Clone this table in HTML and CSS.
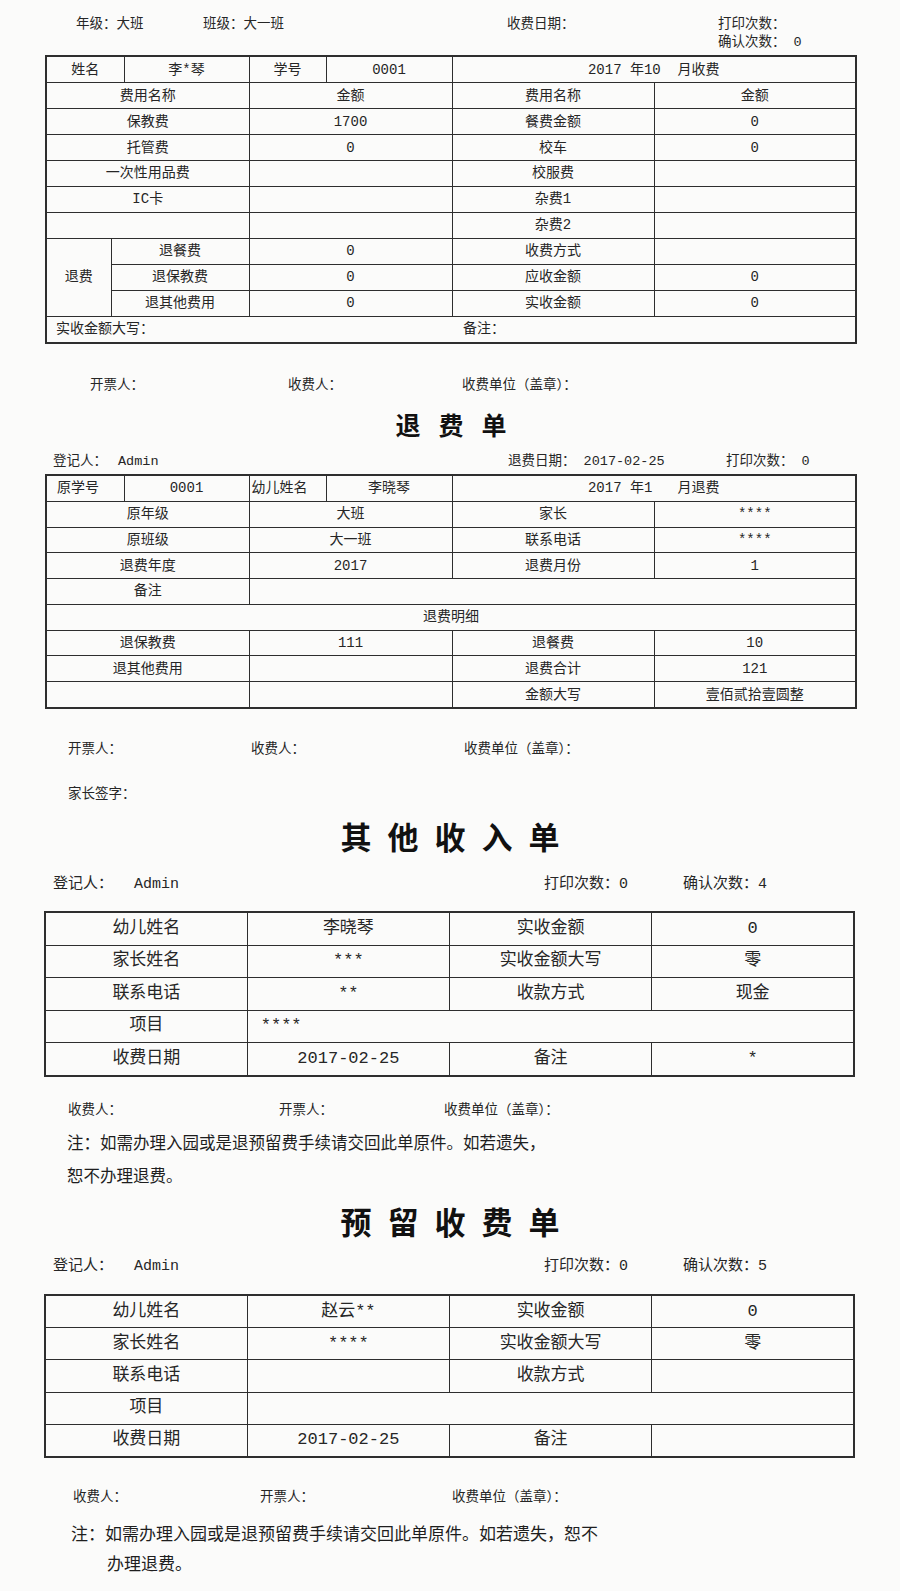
FILE: index.html
```html
<!DOCTYPE html>
<html lang="zh-CN">
<head>
<meta charset="utf-8">
<title>收费单</title>
<link rel="stylesheet" href="styles.css">
</head>
<body>
<div class="page">
  <div class="hdr1">
    <span class="h-a">年级：大班</span>
    <span class="h-b">班级：大一班</span>
    <span class="h-c">收费日期：</span>
    <span>打印次数：</span>
  </div>
  <div class="hdr2">确认次数：&nbsp;0</div>

  <table class="t t1">
    <colgroup><col class="c65"><col class="c13"><col class="c125"><col class="c77"><col class="c126"><col class="c202"><col class="c202"></colgroup>
    <tr><td colspan="2">姓名</td><td>李*琴</td><td>学号</td><td>0001</td><td colspan="2">2017 年10&nbsp;&nbsp;月收费</td></tr>
    <tr><td colspan="3">费用名称</td><td colspan="2">金额</td><td>费用名称</td><td>金额</td></tr>
    <tr><td colspan="3">保教费</td><td colspan="2">1700</td><td>餐费金额</td><td>0</td></tr>
    <tr><td colspan="3">托管费</td><td colspan="2">0</td><td>校车</td><td>0</td></tr>
    <tr><td colspan="3">一次性用品费</td><td colspan="2"></td><td>校服费</td><td></td></tr>
    <tr><td colspan="3">IC卡</td><td colspan="2"></td><td>杂费1</td><td></td></tr>
    <tr><td colspan="3"></td><td colspan="2"></td><td>杂费2</td><td></td></tr>
    <tr><td rowspan="3">退费</td><td colspan="2">退餐费</td><td colspan="2">0</td><td>收费方式</td><td></td></tr>
    <tr><td colspan="2">退保教费</td><td colspan="2">0</td><td>应收金额</td><td>0</td></tr>
    <tr><td colspan="2">退其他费用</td><td colspan="2">0</td><td>实收金额</td><td>0</td></tr>
    <tr><td colspan="5" class="lft p9">实收金额大写：</td><td colspan="2" class="lft p11 nosep">备注：</td></tr>
  </table>

  <div class="sign s1"><span class="w198">开票人：</span><span class="w174">收费人：</span><span>收费单位（盖章）：</span></div>

  <h1 class="title small">退费单</h1>

  <div class="meta m2"><span class="w455">登记人：<span class="admin-s">Admin</span></span><span class="w218">退费日期：&nbsp;2017-02-25</span><span>打印次数：&nbsp;0</span></div>

  <table class="t t2">
    <colgroup><col class="c78"><col class="c125"><col class="c77"><col class="c126"><col class="c202"><col class="c202"></colgroup>
    <tr><td class="lft p10">原学号</td><td>0001</td><td class="lft p2">幼儿姓名</td><td>李晓琴</td><td colspan="2">2017 年1&nbsp;&nbsp;&nbsp;月退费</td></tr>
    <tr><td colspan="2">原年级</td><td colspan="2">大班</td><td>家长</td><td>****</td></tr>
    <tr><td colspan="2">原班级</td><td colspan="2">大一班</td><td>联系电话</td><td>****</td></tr>
    <tr><td colspan="2">退费年度</td><td colspan="2">2017</td><td>退费月份</td><td>1</td></tr>
    <tr><td colspan="2">备注</td><td colspan="4"></td></tr>
    <tr><td colspan="6">退费明细</td></tr>
    <tr><td colspan="2">退保教费</td><td colspan="2">111</td><td>退餐费</td><td>10</td></tr>
    <tr><td colspan="2">退其他费用</td><td colspan="2"></td><td>退费合计</td><td>121</td></tr>
    <tr><td colspan="2"></td><td colspan="2"></td><td>金额大写</td><td>壹佰贰拾壹圆整</td></tr>
  </table>

  <div class="sign s2"><span class="w183">开票人：</span><span class="w213">收费人：</span><span>收费单位（盖章）：</span></div>
  <div class="sign s3"><span>家长签字：</span></div>

  <h1 class="title big">其他收入单</h1>

  <div class="meta m3"><span class="w491">登记人：<span class="admin-l">Admin</span></span><span class="w139">打印次数：0</span><span>确认次数：4</span></div>

  <table class="t t3">
    <colgroup><col class="q"><col class="q"><col class="q"><col class="q"></colgroup>
    <tr><td>幼儿姓名</td><td>李晓琴</td><td>实收金额</td><td>0</td></tr>
    <tr><td>家长姓名</td><td>***</td><td>实收金额大写</td><td>零</td></tr>
    <tr><td>联系电话</td><td>**</td><td>收款方式</td><td>现金</td></tr>
    <tr><td>项目</td><td colspan="3" class="lft p13">****</td></tr>
    <tr><td>收费日期</td><td>2017-02-25</td><td>备注</td><td>*</td></tr>
  </table>

  <div class="sign s4"><span class="w211">收费人：</span><span class="w165">开票人：</span><span>收费单位（盖章）：</span></div>
  <p class="note n1">注：如需办理入园或是退预留费手续请交回此单原件。如若遗失，<br>恕不办理退费。</p>

  <h1 class="title big t-b">预留收费单</h1>

  <div class="meta m4"><span class="w491">登记人：<span class="admin-l">Admin</span></span><span class="w139">打印次数：0</span><span>确认次数：5</span></div>

  <table class="t t4">
    <colgroup><col class="q"><col class="q"><col class="q"><col class="q"></colgroup>
    <tr><td>幼儿姓名</td><td>赵云**</td><td>实收金额</td><td>0</td></tr>
    <tr><td>家长姓名</td><td>****</td><td>实收金额大写</td><td>零</td></tr>
    <tr><td>联系电话</td><td></td><td>收款方式</td><td></td></tr>
    <tr><td>项目</td><td colspan="3"></td></tr>
    <tr><td>收费日期</td><td>2017-02-25</td><td>备注</td><td></td></tr>
  </table>

  <div class="sign s5"><span class="w187">收费人：</span><span class="w192">开票人：</span><span>收费单位（盖章）：</span></div>
  <p class="note n2">注：如需办理入园或是退预留费手续请交回此单原件。如若遗失，恕不<br>办理退费。</p>
</div>
</body>
</html>
```

FILE: styles.css
```css
html, body {
  margin: 0;
  padding: 0;
  background: #fbfbfa;
}
body {
  color: #262626;
  font-family: "Liberation Mono", "Noto Sans CJK SC", monospace;
  font-size: 14px;
}
.page {
  width: 900px;
  padding-top: 16px;
  padding-bottom: 10px;
}

/* top header */
.hdr1 {
  display: flex;
  height: 18px;
  line-height: 18px;
  padding-left: 76px;
  font-size: 13.5px;
}
.h-a { width: 127px; }
.h-b { width: 304px; }
.h-c { width: 211px; }
.hdr2 {
  height: 18px;
  line-height: 18px;
  padding-left: 718px;
  font-size: 13.5px;
}

/* tables */
.t {
  margin-left: 45px;
  width: 810px;
  border-collapse: collapse;
  table-layout: fixed;
  border: 2px solid #2e2e2e;
}
.t td {
  border: 1px solid #2e2e2e;
  padding: 0;
  text-align: center;
  vertical-align: middle;
  line-height: 16px;
  white-space: nowrap;
  overflow: hidden;
}
.t1 { margin-top: 3px; height: 289px; font-size: 14px; }
.t2 { margin-top: 3px; height: 235px; font-size: 14px; }
.t3 { margin-left: 44px; margin-top: 16px; height: 166px; font-size: 17px; width: 811px; }
.t4 { margin-left: 44px; margin-top: 17px; height: 164px; font-size: 17px; width: 811px; }
.t3 td, .t4 td { line-height: 20px; }

.c65 { width: 65px; }
.c13 { width: 13px; }
.c125 { width: 125px; }
.c77 { width: 77px; }
.c126 { width: 126px; }
.c202 { width: 202px; }
.c78 { width: 78px; }
.q { width: 25%; }

.t td.lft { text-align: left; }
.p2 { padding-left: 2px !important; }
.p9 { padding-left: 9px !important; }
.p10 { padding-left: 10px !important; }
.p11 { padding-left: 11px !important; }
.p13 { padding-left: 13px !important; }
.t td.nosep { border-left-style: hidden; }

/* signer rows */
.sign {
  display: flex;
  height: 20px;
  line-height: 20px;
  font-size: 13.5px;
}
.s1 { margin-top: 32px; padding-left: 90px; }
.s2 { margin-top: 31px; padding-left: 68px; }
.s3 { margin-top: 25px; padding-left: 68px; }
.s4 { margin-top: 24px; padding-left: 68px; }
.s5 { margin-top: 30px; padding-left: 73px; }
.w198 { width: 198px; }
.w174 { width: 174px; }
.w183 { width: 183px; }
.w213 { width: 213px; }
.w211 { width: 211px; }
.w165 { width: 165px; }
.w187 { width: 187px; }
.w192 { width: 192px; }

/* titles */
.title {
  margin: 0;
  text-align: center;
  font-family: "Noto Sans CJK SC", sans-serif;
  font-weight: 700;
  color: #111;
}
.title.small {
  margin-top: 11px;
  height: 34px;
  line-height: 34px;
  font-size: 25px;
  letter-spacing: 18px;
  padding-left: 20px;
}
.title.big {
  margin-top: 11px;
  height: 40px;
  line-height: 40px;
  font-size: 31px;
  letter-spacing: 16px;
  padding-left: 16px;
}
.title.t-b { margin-top: 7px; }

/* meta rows */
.meta {
  display: flex;
  padding-left: 53px;
}
.m2 {
  margin-top: 12px;
  height: 18px;
  line-height: 18px;
  font-size: 13.5px;
}
.m3, .m4 {
  height: 20px;
  line-height: 20px;
  font-size: 15px;
}
.m3 { margin-top: 19px; }
.m4 { margin-top: 16px; }
.w455 { width: 455px; }
.w218 { width: 218px; }
.w491 { width: 491px; }
.w139 { width: 139px; }
.admin-s { margin-left: 11px; }
.admin-l { margin-left: 21px; }

/* notes */
.note {
  margin: 0;
  font-size: 16.5px;
  color: #1e1e1e;
}
.n1 {
  margin-top: 7px;
  padding-left: 67px;
  line-height: 33px;
}
.n2 {
  margin-top: 13px;
  padding-left: 107px;
  text-indent: -36px;
  line-height: 30px;
  font-size: 17px;
}
```
